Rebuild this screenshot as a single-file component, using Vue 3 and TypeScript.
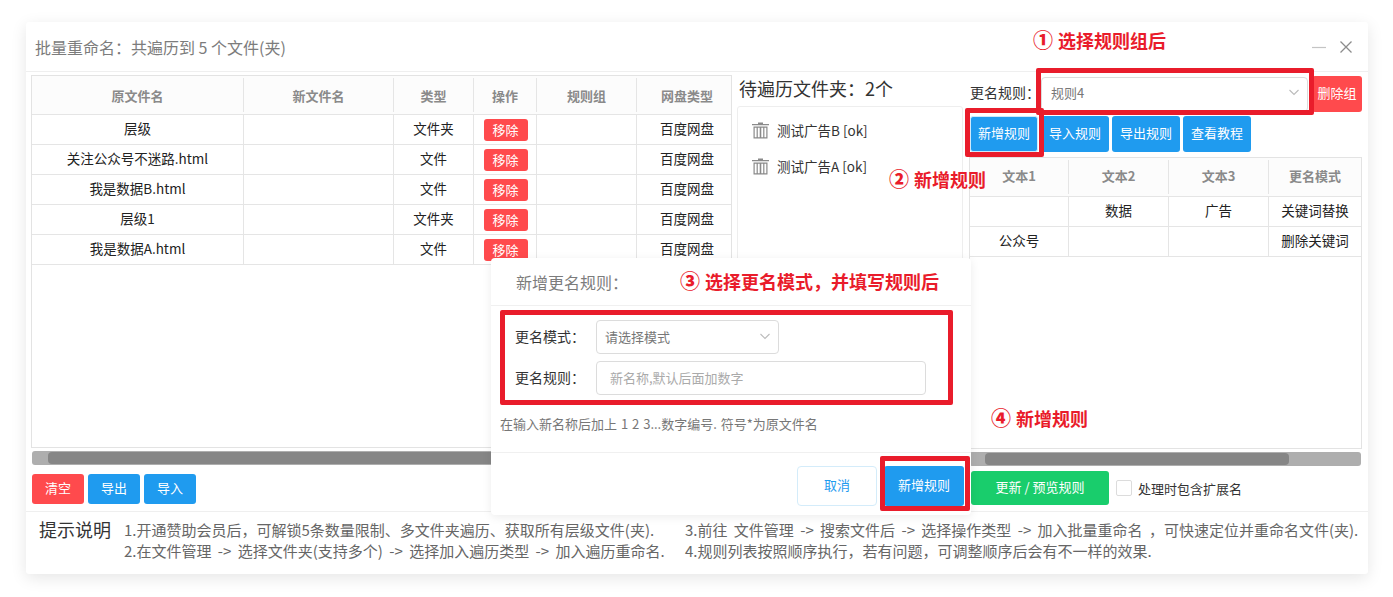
<script setup lang="ts">
interface FileRow {
  name: string;
  type: string;
}
interface RuleRow {
  a: string;
  b: string;
  c: string;
  mode: string;
}

const files: FileRow[] = [
  { name: '层级', type: '文件夹' },
  { name: '关注公众号不迷路.html', type: '文件' },
  { name: '我是数据B.html', type: '文件' },
  { name: '层级1', type: '文件夹' },
  { name: '我是数据A.html', type: '文件' },
];
const folders = ['测试广告B [ok]', '测试广告A [ok]'];
const rules: RuleRow[] = [
  { a: '', b: '数据', c: '广告', mode: '关键词替换' },
  { a: '公众号', b: '', c: '', mode: '删除关键词' },
];
</script>

<template>
  <div class="page">
    <div class="window">
      <div class="win-head">
        <span class="win-title">批量重命名：共遍历到 5 个文件(夹)</span>
        <div class="win-ctrl">
          <svg width="16" height="16" viewBox="0 0 16 16"><path d="M1 8.500h14" stroke="#c4c4c4" stroke-width="1.200" /></svg>
          <svg width="16" height="16" viewBox="0 0 16 16"><path d="M2.500 2.500l11 11M13.500 2.500l-11 11" stroke="#8c8c8c" stroke-width="1.300" /></svg>
        </div>
      </div>

      <div class="win-body">
        <div class="left">
          <div class="table-box file-box">
            <div class="row head file-row">
              <div>原文件名</div><div>新文件名</div><div>类型</div><div>操作</div><div>规则组</div><div>网盘类型</div>
            </div>
            <div v-for="f in files" :key="f.name" class="row file-row">
              <div>{{ f.name }}</div>
              <div></div>
              <div>{{ f.type }}</div>
              <div><button class="btn-remove">移除</button></div>
              <div></div>
              <div>百度网盘</div>
            </div>
          </div>
          <div class="scroll"><div class="thumb thumb-left"></div></div>
          <div class="btn-line">
            <button class="btn red">清空</button>
            <button class="btn blue">导出</button>
            <button class="btn blue">导入</button>
          </div>
        </div>

        <div class="middle">
          <div class="mid-title">待遍历文件夹：2个</div>
          <div class="folder-box">
            <div v-for="name in folders" :key="name" class="folder">
              <svg width="17" height="17" viewBox="0 0 17 17" fill="#8a8a8a">
                <path d="M6 0.500h5v1.500h6v1.200h-17v-1.200h6zM1.500 4.500h14v12h-14zM2.700 5.700v9.600h1.900v-9.600zM5.800 5.700v9.600h1.900v-9.600zM9.300 5.700v9.600h1.900v-9.600zM12.400 5.700v9.600h1.900v-9.600z" fill-rule="evenodd" />
              </svg>
              <span>{{ name }}</span>
            </div>
          </div>
        </div>

        <div class="right">
          <div class="rule-top">
            <span class="rule-label">更名规则：</span>
            <div class="select group-select">
              <span>规则4</span>
              <svg width="12" height="12" viewBox="0 0 12 12"><path d="M1.500 4l4.500 4.500 4.500-4.500" fill="none" stroke="#bbb" stroke-width="1.100" /></svg>
            </div>
            <button class="btn red del-group">删除组</button>
          </div>
          <div class="rule-btns">
            <button class="btn blue tall">新增规则</button>
            <button class="btn blue tall">导入规则</button>
            <button class="btn blue tall">导出规则</button>
            <button class="btn blue tall">查看教程</button>
          </div>
          <div class="table-box rule-box">
            <div class="row head rule-row rule-head">
              <div>文本1</div><div>文本2</div><div>文本3</div><div>更名模式</div>
            </div>
            <div v-for="r in rules" :key="r.mode" class="row rule-row">
              <div>{{ r.a }}</div><div>{{ r.b }}</div><div>{{ r.c }}</div><div>{{ r.mode }}</div>
            </div>
          </div>
          <div class="scroll"><div class="thumb thumb-right"></div></div>
          <div class="btn-line right-actions">
            <button class="btn green">更新 / 预览规则</button>
            <label class="check"><i></i>处理时包含扩展名</label>
          </div>
        </div>
      </div>

      <div class="tips">
        <div class="tips-title">提示说明</div>
        <div class="tips-col">
          <div>1.开通赞助会员后，可解锁5条数量限制、多文件夹遍历、获取所有层级文件(夹).</div>
          <div>2.在文件管理 -&gt; 选择文件夹(支持多个) -&gt; 选择加入遍历类型 -&gt; 加入遍历重命名.</div>
        </div>
        <div class="tips-col">
          <div>3.前往 文件管理 -&gt; 搜索文件后 -&gt; 选择操作类型 -&gt; 加入批量重命名 ，可快速定位并重命名文件(夹).</div>
          <div>4.规则列表按照顺序执行，若有问题，可调整顺序后会有不一样的效果.</div>
        </div>
      </div>
    </div>

    <div class="modal">
      <div class="modal-head">新增更名规则：</div>
      <div class="modal-form">
        <div class="form-line">
          <span class="form-label">更名模式：</span>
          <div class="select mode-select">
            <span>请选择模式</span>
            <svg width="12" height="12" viewBox="0 0 12 12"><path d="M1.500 4l4.500 4.500 4.500-4.500" fill="none" stroke="#bbb" stroke-width="1.100" /></svg>
          </div>
        </div>
        <div class="form-line">
          <span class="form-label">更名规则：</span>
          <div class="select name-input">新名称,默认后面加数字</div>
        </div>
      </div>
      <div class="modal-hint">在输入新名称后加上 1 2 3...数字编号. 符号*为原文件名</div>
      <div class="modal-foot">
        <button class="btn-cancel">取消</button>
        <button class="btn blue modal-ok">新增规则</button>
      </div>
    </div>

    <!-- 标注层 -->
    <div class="mark" style="left:1036px;top:68px;width:278px;height:47px"></div>
    <div class="mark" style="left:965px;top:108px;width:79px;height:49px"></div>
    <div class="mark" style="left:500px;top:310px;width:453px;height:95px"></div>
    <div class="mark" style="left:880px;top:456px;width:90px;height:55px"></div>
    <div class="note" style="left:1033px;top:27px"><b>①</b>选择规则组后</div>
    <div class="note" style="left:889px;top:166px"><b>②</b>新增规则</div>
    <div class="note" style="left:680px;top:268px"><b>③</b>选择更名模式，并填写规则后</div>
    <div class="note" style="left:991px;top:405px"><b>④</b>新增规则</div>
  </div>
</template>

<style>
html,
body {
  margin: 0;
  background: #fff;
}
</style>

<style scoped>
.page {
  position: relative;
  width: 1393px;
  height: 597px;
  padding: 22px 25px 23px 26px;
  box-sizing: border-box;
  overflow: hidden;
  font-family: "Noto Sans CJK SC", "Noto Sans", sans-serif;
  font-size: 13px;
  color: #222;
}
.window {
  height: 552px;
  background: #fff;
  border-radius: 3px;
  box-shadow: 0 4px 16px rgba(0, 0, 0, 0.1);
  display: flex;
  flex-direction: column;
}
.win-head {
  height: 49px;
  flex: none;
  display: flex;
  align-items: center;
  justify-content: space-between;
  padding: 0 14px 0 9px;
  border-bottom: 1px solid #efefef;
}
.win-title {
  font-size: 16px;
  color: #7c7c7c;
}
.win-ctrl {
  display: flex;
  gap: 11px;
}
.win-body {
  height: 439px;
  flex: none;
  display: flex;
  padding: 3px 6px 0 5px;
  box-sizing: border-box;
}
.left {
  width: 701px;
  flex: none;
}
.table-box {
  height: 373px;
  border: 1px solid #e3e3e3;
  box-sizing: border-box;
  overflow: hidden;
}
.row {
  display: grid;
  height: 30px;
  border-bottom: 1px solid #e5e5e5;
  box-sizing: border-box;
  font-size: 13.500px;
}
.row > div {
  display: flex;
  align-items: center;
  justify-content: center;
  border-left: 1px solid #e5e5e5;
  padding-bottom: 3px;
  box-sizing: border-box;
  white-space: nowrap;
}
.row > div:first-child {
  border-left: 0;
}
.file-row {
  grid-template-columns: 211px 150px 80px 63px 100px 1fr;
}
.file-row > div:last-child {
  padding-left: 6px;
}
.head {
  height: 39px;
  padding: 2px 0;
  background: #fcfcfc;
  color: #8a8a8a;
  font-size: 13px;
  font-weight: 700;
}
.head > div {
  padding-bottom: 0;
}
.btn-remove {
  width: 44px;
  height: 22px;
  margin: 3px 0 0 1px;
  padding: 0 0 1px;
  border: 0;
  border-radius: 3px;
  background: #ff4a4d;
  color: #fff;
  font: inherit;
  font-size: 13px;
}
.scroll {
  height: 14px;
  margin: 3px 0 0 1px;
  background: #aeaeae;
  border-radius: 3px;
  padding: 1px 0;
  box-sizing: border-box;
}
.thumb {
  height: 100%;
  background: #868686;
  border-radius: 4px;
}
.thumb-left {
  margin-left: 16px;
  width: 900px;
}
.thumb-right {
  margin-left: 16px;
  width: 304px;
}
.btn-line {
  display: flex;
  gap: 4px;
  margin-top: 9px;
  margin-left: 1px;
}
.btn {
  height: 30px;
  width: 52px;
  padding: 0 0 3px;
  border: 0;
  border-radius: 3px;
  color: #fff;
  font: inherit;
}
.red {
  background: #ff4a4d;
}
.blue {
  background: #1f9bef;
}
.green {
  width: 138px;
  height: 34px;
  background: #19cd6c;
}
.middle {
  width: 226px;
  flex: none;
  margin-left: 5px;
}
.mid-title {
  height: 31px;
  padding-left: 2px;
  font-size: 18px;
  line-height: 27px;
  color: #333;
}
.folder-box {
  height: 346px;
  border: 1px solid #eee;
  border-radius: 3px;
  padding: 5px 0 0 14px;
  box-sizing: border-box;
}
.folder {
  display: flex;
  align-items: center;
  gap: 8px;
  height: 36px;
  font-size: 13.500px;
  color: #333;
}
.right {
  width: 393px;
  flex: none;
  margin-left: 6px;
  position: relative;
}
.rule-top {
  display: flex;
  align-items: center;
  height: 36px;
  margin-top: 1px;
}
.rule-label {
  font-size: 14px;
  color: #333;
  width: 69px;
  padding: 0 0 5px 1px;
  box-sizing: border-box;
  flex: none;
  white-space: nowrap;
}
.select {
  border: 1px solid #dcdcdc;
  border-radius: 4px;
  background: #fff;
  box-sizing: border-box;
  display: flex;
  align-items: center;
  justify-content: space-between;
  color: #777;
}
.group-select {
  height: 35px;
  margin-left: 3px;
  padding: 0 7px 4px 9px;
  width: 272px;
}
.del-group {
  width: 50px;
  height: 36px;
  margin-left: 4px;
  flex: none;
}
.rule-btns {
  display: flex;
  gap: 3px;
  margin-top: 4px;
  margin-left: 1px;
}
.tall {
  width: 68px;
  height: 36px;
}
.tall:first-child {
  border: 1px solid #cfe9fb;
}
.rule-box {
  height: 292px;
  margin-top: 5px;
}
.rule-row {
  grid-template-columns: 98px 100px 100px 1fr;
}
.rule-head {
  height: 39px;
}
.rule-head > div {
  padding-bottom: 3px;
}
.right .scroll {
  margin-left: 0;
  width: 392px;
}
.right-actions {
  margin-top: 5px;
  margin-left: 2px;
  gap: 7px;
  align-items: center;
}
.check {
  display: flex;
  align-items: center;
  gap: 6px;
  color: #333;
}
.check i {
  width: 14px;
  height: 14px;
  border: 1px solid #dcdcdc;
  border-radius: 2px;
}
.tips {
  flex: 1;
  border-top: 1px solid #efefef;
  display: flex;
  padding: 7px 0 0 13px;
  color: #666;
  font-size: 15px;
  line-height: 21px;
  word-spacing: 3px;
}
.tips-title {
  width: 85px;
  flex: none;
  font-size: 18px;
  line-height: 21px;
  color: #333;
}
.tips-col {
  white-space: nowrap;
  width: 561px;
  flex: none;
}
.modal {
  position: absolute;
  left: 491px;
  top: 258px;
  width: 480px;
  height: 257px;
  background: #fff;
  border-radius: 4px;
  box-shadow: 0 2px 10px rgba(0, 0, 0, 0.08);
  display: flex;
  flex-direction: column;
}
.modal-head {
  height: 48px;
  flex: none;
  box-sizing: border-box;
  padding: 12px 0 0 25px;
  font-size: 16px;
  color: #7c7c7c;
  border-bottom: 1px solid #f0f0f0;
}
.modal-form {
  padding: 14px 0 0 24px;
  height: 96px;
  box-sizing: border-box;
  display: flex;
  flex-direction: column;
  gap: 7px;
  flex: none;
}
.form-line {
  display: flex;
  align-items: center;
}
.form-label {
  width: 81px;
  flex: none;
  padding-bottom: 2px;
  font-size: 14px;
  color: #333;
}
.mode-select {
  width: 183px;
  height: 34px;
  padding: 0 7px 2px 8px;
}
.name-input {
  width: 330px;
  height: 34px;
  padding: 0 0 2px 13px;
  color: #aaa;
}
.modal-hint {
  height: 51px;
  padding: 12px 0 0 9px;
  box-sizing: border-box;
  color: #777;
  word-spacing: 1px;
  border-bottom: 1px solid #f0f0f0;
  flex: none;
}
.modal-foot {
  flex: 1;
  display: flex;
  justify-content: flex-end;
  gap: 7px;
  padding: 13px 7px 0 0;
}
.btn-cancel {
  width: 80px;
  height: 40px;
  padding: 0 0 3px;
  background: #fff;
  border: 1px solid #d4ecfa;
  border-radius: 4px;
  color: #1f9bef;
  font: inherit;
}
.modal-ok {
  width: 80px;
  height: 40px;
}
.mark {
  position: absolute;
  box-sizing: border-box;
  border: 5px solid #e91c2b;
  border-radius: 2px;
}
.note {
  position: absolute;
  font-size: 18px;
  line-height: 26px;
  font-weight: 700;
  color: #e91c2b;
  white-space: nowrap;
}
.note b {
  font-size: 20px;
  margin-right: 5px;
}
</style>
